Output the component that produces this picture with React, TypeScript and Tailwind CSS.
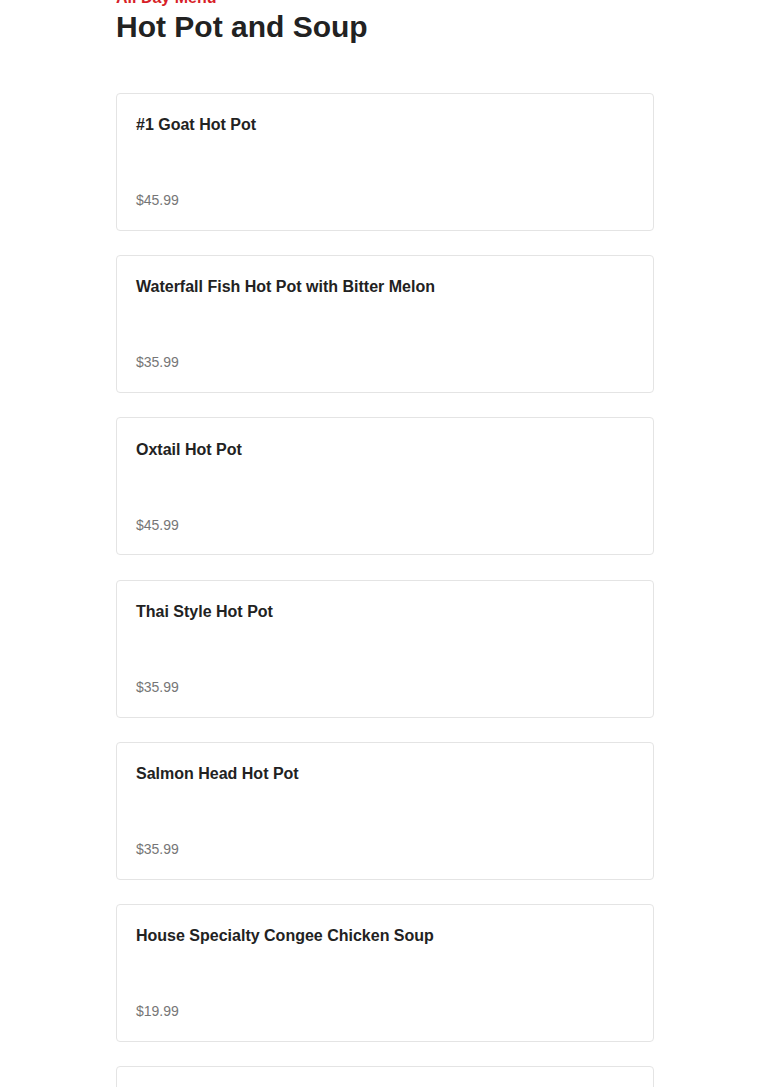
import React from "react";

const items = [
  { name: "#1 Goat Hot Pot", price: "$45.99" },
  { name: "Waterfall Fish Hot Pot with Bitter Melon", price: "$35.99" },
  { name: "Oxtail Hot Pot", price: "$45.99" },
  { name: "Thai Style Hot Pot", price: "$35.99" },
  { name: "Salmon Head Hot Pot", price: "$35.99" },
  { name: "House Specialty Congee Chicken Soup", price: "$19.99" },
  { name: "Seafood Tofu Soup", price: "$18.99" },
];

export default function App() {
  return (
    <div
      className="min-h-screen bg-white overflow-hidden"
      style={{ fontFamily: '"Liberation Sans", Arial, sans-serif' }}
    >
      <div className="w-[538px] ml-[116px]">
        <div className="mt-[-12px] text-[16px] leading-[19px] font-bold text-[#d71e28]">
          All Day Menu
        </div>
        <h1 className="mt-[2px] text-[30px] leading-[36px] font-bold text-[#222222]">
          Hot Pot and Soup
        </h1>
        <div className="mt-[48px] flex flex-col gap-[24.2px]">
          {items.map((it) => (
            <div
              key={it.name}
              className="border border-[#e4e4e4] rounded-[4px] px-[19px] pt-[19.2px] pb-[19.8px] flex flex-col"
            >
              <div className="text-[16px] leading-[24px] font-bold text-[#222222]">
                {it.name}
              </div>
              <div className="mt-[53px] text-[14px] leading-[20px] text-[#767676]">
                {it.price}
              </div>
            </div>
          ))}
        </div>
      </div>
    </div>
  );
}
